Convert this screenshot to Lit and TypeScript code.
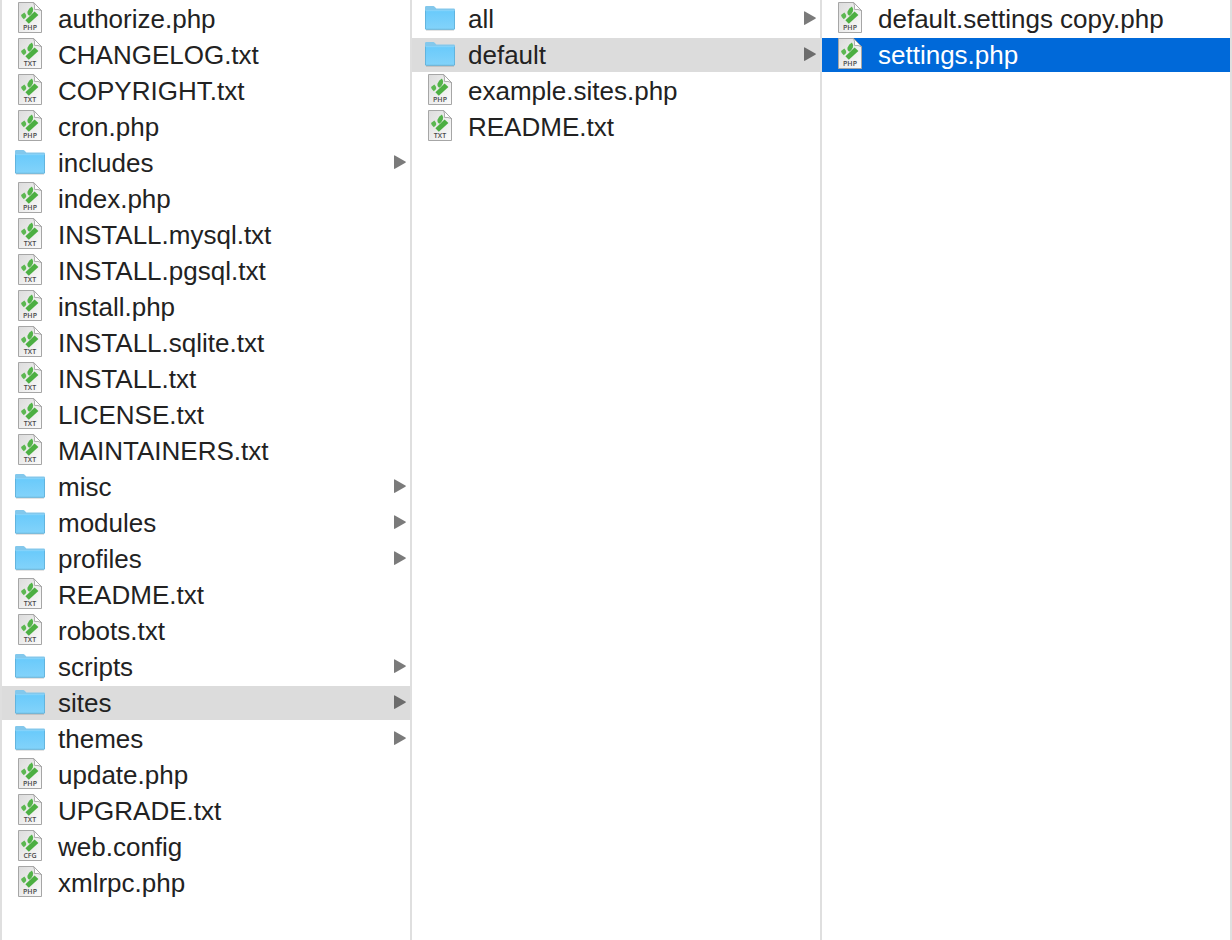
import { LitElement, html, svg, css, nothing } from "lit";
import { customElement, property, state } from "lit/decorators.js";
import { classMap } from "lit/directives/class-map.js";

@customElement("entry-icon")
class EntryIcon extends LitElement {
  @property() name = "";

  static styles = css`
    :host {
      display: block;
      flex: none;
    }
    svg {
      display: block;
    }
    .label {
      font-family: "Open Sans", sans-serif;
      font-size: 7px;
      font-weight: 600;
      fill: #4a4a4a;
      text-anchor: middle;
    }
  `;

  folder() {
    return svg`
      <defs>
        <linearGradient id="front" x1="0" y1="0" x2="0" y2="1">
          <stop offset="0" stop-color="#69cafb"></stop>
          <stop offset="1" stop-color="#83d3fa"></stop>
        </linearGradient>
      </defs>
      <path d="M1 28H29" stroke="#000" stroke-opacity=".16" stroke-width="1.4"></path>
      <path d="M0 8V5.2Q0 4 1.2 4H8.2Q9.2 4 9.9 4.9L11.4 6.4H28.8Q30 6.4 30 7.6V12H0Z" fill="#83c8ec"></path>
      <path d="M0 9.2Q0 8.4 .8 8.4H29.2Q30 8.4 30 9.2V26.4Q30 27.6 28.8 27.6H1.2Q0 27.6 0 26.4Z" fill="url(#front)"></path>
      <path d="M.4 8.6V26.2Q.4 27.3 1.3 27.3H28.7Q29.6 27.3 29.6 26.2V8.6" fill="none" stroke="#5ba9d2" stroke-width=".8"></path>
      <path d="M.6 8.7H29.4" stroke="#96dcff" stroke-width=".6"></path>`;
  }

  file(ext: string) {
    return svg`
      <defs>
        <linearGradient id="paper" x1="0" y1="0" x2="1" y2="1">
          <stop offset="0" stop-color="#dcdcdc"></stop>
          <stop offset=".5" stop-color="#ececec"></stop>
          <stop offset="1" stop-color="#fbfbfb"></stop>
        </linearGradient>
      </defs>
      <path d="M3.5 .5H18.6L26.5 8.6V30.5H3.5Z" fill="url(#paper)" stroke="#a6a6a6"></path>
      <path d="M18.6 .5Q20.2 4 19.4 7.4Q23 7 26.5 8.6Z" fill="#fff" stroke="#999" stroke-width=".8"></path>
      <path d="M10.4 18.2L19.6 9.6L23.4 13L13.8 21.8Z" fill="#4caf42"></path>
      <path d="M12.6 9.4Q13.8 6 17 4.6Q18.6 6.6 17.8 9.6Q16.8 12.4 14.4 13.8Q11.8 12 12.6 9.4Z" fill="#52b449"></path>
      <path d="M6 13L9.4 10.6Q11.4 12.6 11.2 15L8.8 17.2Q6.2 15.4 6 13Z" fill="#5cb852"></path>
      <text class="label" x="15" y="28">${ext}</text>`;
  }

  render() {
    const dot = this.name.lastIndexOf(".");
    const ext = this.name.endsWith("config") ? "CFG" : this.name.slice(dot + 1).toUpperCase();
    return html`<svg width="30" height="34" viewBox="0 0 30 34" aria-hidden="true">
      ${dot < 0 ? this.folder() : this.file(ext)}
    </svg>`;
  }
}

interface Column {
  names: string[];
  selected: string;
}

@customElement("app-root")
class AppRoot extends LitElement {
  @state() columns: Column[] = [
    {
      names: [
        "authorize.php", "CHANGELOG.txt", "COPYRIGHT.txt", "cron.php", "includes",
        "index.php", "INSTALL.mysql.txt", "INSTALL.pgsql.txt", "install.php",
        "INSTALL.sqlite.txt", "INSTALL.txt", "LICENSE.txt", "MAINTAINERS.txt",
        "misc", "modules", "profiles", "README.txt", "robots.txt", "scripts",
        "sites", "themes", "update.php", "UPGRADE.txt", "web.config", "xmlrpc.php",
      ],
      selected: "sites",
    },
    { names: ["all", "default", "example.sites.php", "README.txt"], selected: "default" },
    { names: ["default.settings copy.php", "settings.php"], selected: "settings.php" },
  ];

  static styles = css`
    :host {
      display: grid;
      grid-template-columns: repeat(3, minmax(0, 1fr));
      box-sizing: border-box;
      min-height: 100vh;
      border-right: 2px solid #dfdfdf;
      background: #fff;
      color: #222;
      font-family: "Liberation Sans", Arial, sans-serif;
    }
    .column {
      display: flex;
      flex-direction: column;
      gap: 2px;
      margin: 0;
      padding: 2px 0;
      border-left: 2px solid #dfdfdf;
      list-style: none;
    }
    .row {
      display: flex;
      align-items: center;
      width: 100%;
      height: 34px;
      padding: 0 4px 0 13px;
      border: 0;
      background: none;
      color: inherit;
      font-family: inherit;
      font-size: 26px;
      line-height: 34px;
      text-align: left;
    }
    .path {
      background: #dcdcdc;
    }
    .active {
      background: #0069d9;
      color: #fff;
    }
    .name {
      flex: 1;
      min-width: 0;
      padding-left: 13px;
      overflow: hidden;
      text-overflow: ellipsis;
      white-space: nowrap;
    }
    .arrow {
      flex: none;
      fill: #7b7b7b;
    }
    .path .arrow {
      fill: #6c6c6c;
    }
  `;

  select(index: number, name: string) {
    this.columns = this.columns.map((c, i) => (i === index ? { ...c, selected: name } : c));
  }

  render() {
    const last = this.columns.length - 1;
    return this.columns.map(
      (column, i) => html`<ul class="column">
        ${column.names.map((name) => {
          const on = name === column.selected;
          return html`<li>
            <button
              class=${classMap({ row: true, path: on && i < last, active: on && i === last })}
              type="button"
              @click=${() => this.select(i, name)}
            >
              <entry-icon name=${name}></entry-icon>
              <span class="name">${name}</span>
              ${name.includes(".")
                ? nothing
                : html`<svg class="arrow" width="12" height="16" viewBox="0 0 12 16" aria-hidden="true">
                    <path d="M0 .9Q0 0 .9 .4L11.4 6.5Q12.4 7.1 11.4 7.7L.9 13.8Q0 14.2 0 13.3Z"></path>
                  </svg>`}
            </button>
          </li>`;
        })}
      </ul>`
    );
  }
}
